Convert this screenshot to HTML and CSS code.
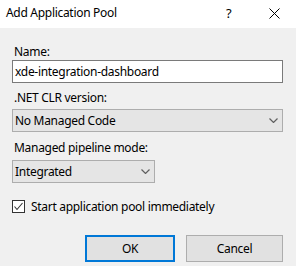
FILE: index.html
```html
<!DOCTYPE html>
<html>
<head>
<meta charset="utf-8">
<link rel="stylesheet" href="styles.css">
</head>
<body>
<div class="dialog">
  <div class="titlebar">
    <span class="title">Add Application Pool</span>
    <span class="help">?</span>
    <span class="close">
      <svg width="11" height="11" viewBox="0 0 11 11"><path d="M0.5 0.5 L10.5 10.5 M10.5 0.5 L0.5 10.5" stroke="#000" stroke-width="1" fill="none"/></svg>
    </span>
  </div>
  <div class="content">
    <div class="label l-name">Name:</div>
    <div class="textbox">xde-integration-dashboard</div>
    <div class="label l-clr">.NET CLR version:</div>
    <div class="combo wide">
      <span>No Managed Code</span>
      <svg class="chev" width="9" height="5" viewBox="0 0 9 5"><path d="M0.5 0.5 L4.5 4.5 L8.5 0.5" stroke="#606060" stroke-width="1.2" fill="none"/></svg>
    </div>
    <div class="label l-pipe">Managed pipeline mode:</div>
    <div class="combo narrow">
      <span>Integrated</span>
      <svg class="chev" width="9" height="5" viewBox="0 0 9 5"><path d="M0.5 0.5 L4.5 4.5 L8.5 0.5" stroke="#606060" stroke-width="1.2" fill="none"/></svg>
    </div>
    <div class="check-row">
      <span class="checkbox">
        <svg width="11" height="11" viewBox="0 0 11 11"><path d="M1.5 5.5 L4 8.5 L9.5 2" stroke="#333" stroke-width="1.1" fill="none"/></svg>
      </span>
      <span class="check-label">Start application pool immediately</span>
    </div>
    <div class="buttons">
      <div class="btn ok">OK</div>
      <div class="btn cancel">Cancel</div>
    </div>
  </div>
</div>
</body>
</html>
```
FILE: styles.css
```css
html, body {
  margin: 0;
  padding: 0;
}
body {
  width: 296px;
  height: 266px;
  overflow: hidden;
  background: #f0f0f0;
  font-family: "Noto Sans", "Open Sans", sans-serif;
  font-size: 12px;
  letter-spacing: -0.3px;
  color: #000;
}
.dialog {
  display: flex;
  flex-direction: column;
}
.titlebar {
  height: 28px;
  background: #fff;
  display: flex;
  align-items: center;
  padding-left: 6px;
  box-sizing: border-box;
}
.title {
  flex: 1;
  line-height: 16px;
  margin-top: -2px;
}
.help {
  width: 10px;
  margin-right: 33px;
  margin-top: -2px;
  font-size: 13px;
}
.close {
  display: flex;
  width: 11px;
  height: 11px;
  margin-right: 16px;
  margin-top: -2px;
}
.content {
  display: flex;
  flex-direction: column;
  padding: 0 13px 0 12px;
}
.label {
  height: 16px;
  line-height: 16px;
  padding-left: 2px;
}
.l-name { margin-top: 16px; }
.l-clr { margin-top: 7px; margin-bottom: 3px; }
.l-pipe { margin-top: 8px; margin-bottom: 4px; }
.textbox {
  height: 23px;
  box-sizing: border-box;
  border: 1px solid #7a7a7a;
  background: #fff;
  line-height: 21px;
  padding-left: 2px;
}
.combo {
  height: 23px;
  box-sizing: border-box;
  border: 1px solid #adadad;
  background: #e5e5e5;
  display: flex;
  align-items: center;
  justify-content: space-between;
  padding: 0 4px 0 2px;
}
.combo span { line-height: 21px; }
.combo.narrow { width: 143px; }
.chev { display: block; }
.check-row {
  margin-top: 17px;
  display: flex;
  align-items: center;
  height: 13px;
}
.checkbox {
  width: 13px;
  height: 13px;
  box-sizing: border-box;
  border: 1px solid #333;
  background: #fff;
  display: flex;
  align-items: center;
  justify-content: center;
}
.check-label {
  margin-left: 6px;
  line-height: 16px;
}
.buttons {
  margin-top: 22px;
  display: flex;
  justify-content: flex-end;
  gap: 11px;
}
.btn {
  height: 27px;
  box-sizing: border-box;
  border: 1px solid #adadad;
  background: #e1e1e1;
  display: flex;
  align-items: center;
  justify-content: center;
}
.btn.ok {
  width: 90px;
  border: 2px solid #0078d7;
}
.btn.cancel {
  width: 97px;
}
```
